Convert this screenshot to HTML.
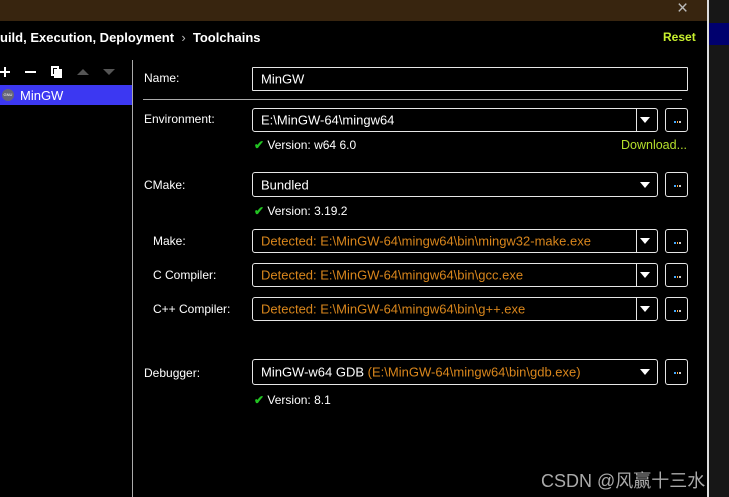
<!DOCTYPE html>
<html><head><meta charset="utf-8"><style>
*{margin:0;padding:0;box-sizing:border-box}
body{width:729px;height:497px;background:#000;position:relative;overflow:hidden;font-family:"Liberation Sans","Noto Sans CJK SC",sans-serif;font-size:12px;color:#fff}
.a{position:absolute;white-space:nowrap}
.box{position:absolute;border:1px solid #e6e6e6;border-radius:3px}
.txt{position:absolute;left:8px;top:50%;transform:translateY(-50%);white-space:nowrap;font-size:13px}
.or{color:#d9861c}
.arr{position:absolute;right:7px;top:50%;margin-top:-3px;width:0;height:0;border-left:5px solid transparent;border-right:5px solid transparent;border-top:6px solid #fff}
.div{position:absolute;right:20px;top:0;bottom:0;border-left:1px solid #e6e6e6}
.btn{position:absolute;border:1px solid #e6e6e6;border-radius:3px;width:23px;height:24px}
.btn:after{content:"";position:absolute;left:8px;top:12px;width:7px;height:2px;background:linear-gradient(90deg,#4af 0 2px,transparent 2px 3px,#fa4 3px 4px,transparent 4px 5px,#ccc 5px)}
.ok{color:#22c322;font-weight:bold}
.lbl{font-size:12px}
</style></head><body>
<div class="a" style="left:0;top:0;width:707px;height:21px;background:#38250f"></div>
<div class="a" style="left:677px;top:-2px;color:#bbb;font-size:19px">×</div>
<div class="a" style="left:707px;top:0;width:2px;height:497px;background:#ddd"></div>
<div class="a" style="left:709px;top:0;width:20px;height:497px;background:#171717"></div>
<div class="a" style="left:709px;top:23px;width:20px;height:22px;background:#00006e"></div>
<div class="a" style="left:0;top:30px;font-weight:bold;font-size:13px">uild, Execution, Deployment &nbsp;<span style="color:#bbb;font-weight:normal">›</span>&nbsp; Toolchains</div>
<div class="a" style="left:663px;top:30px;font-weight:bold;font-size:12px;color:#c8f02e">Reset</div>
<div class="a" style="left:0;top:71px;width:10px;height:2px;background:#fff"></div>
<div class="a" style="left:4px;top:67px;width:2px;height:10px;background:#fff"></div>
<div class="a" style="left:25px;top:71px;width:11px;height:2px;background:#fff"></div>
<div class="a" style="left:51px;top:66px;width:8px;height:10px;border:2px solid #fff"></div>
<div class="a" style="left:54px;top:69px;width:8px;height:9px;background:#fff"></div>
<div class="a" style="left:77px;top:69px;border-left:6px solid transparent;border-right:6px solid transparent;border-bottom:6px solid #555"></div>
<div class="a" style="left:103px;top:69px;border-left:6px solid transparent;border-right:6px solid transparent;border-top:6px solid #555"></div>
<div class="a" style="left:132px;top:60px;width:1px;height:437px;background:#aaa"></div>
<div class="a" style="left:0;top:85px;width:132px;height:20px;background:#3c38f2"></div>
<div class="a" style="left:2px;top:89px;width:12px;height:12px;border-radius:50%;background:#667;font-size:4px;line-height:12px;text-align:center">GNU</div>
<div class="a" style="left:20px;top:88px;font-size:13px">MinGW</div>

<div class="a lbl" style="left:144px;top:71px">Name:</div>
<div class="box" style="left:252px;top:67px;width:436px;height:24px;border-radius:1px"><span class="txt">MinGW</span></div>
<div class="a" style="left:143px;top:99px;width:539px;height:1px;background:#aaa"></div>

<div class="a lbl" style="left:144px;top:112px">Environment:</div>
<div class="box" style="left:252px;top:108px;width:406px;height:24px"><span class="txt">E:\MinGW-64\mingw64</span><div class="div"></div><div class="arr"></div></div>
<div class="btn" style="left:665px;top:108px"></div>
<div class="a" style="left:254px;top:138px"><span class="ok">✔</span>&nbsp;Version: w64 6.0</div>
<div class="a" style="left:621px;top:138px;color:#b6e02c;font-size:12.5px">Download...</div>

<div class="a lbl" style="left:144px;top:178px">CMake:</div>
<div class="box" style="left:252px;top:172px;width:406px;height:25px"><span class="txt">Bundled</span><div class="arr"></div></div>
<div class="btn" style="left:665px;top:172px;height:25px"></div>
<div class="a" style="left:254px;top:204px"><span class="ok">✔</span>&nbsp;Version: 3.19.2</div>

<div class="a lbl" style="left:153px;top:234px">Make:</div>
<div class="box" style="left:252px;top:229px;width:406px;height:24px"><span class="txt or">Detected: E:\MinGW-64\mingw64\bin\mingw32-make.exe</span><div class="div"></div><div class="arr"></div></div>
<div class="btn" style="left:665px;top:229px"></div>
<div class="a lbl" style="left:153px;top:268px">C Compiler:</div>
<div class="box" style="left:252px;top:263px;width:406px;height:24px"><span class="txt or">Detected: E:\MinGW-64\mingw64\bin\gcc.exe</span><div class="div"></div><div class="arr"></div></div>
<div class="btn" style="left:665px;top:263px"></div>
<div class="a lbl" style="left:153px;top:302px">C++ Compiler:</div>
<div class="box" style="left:252px;top:297px;width:406px;height:24px"><span class="txt or">Detected: E:\MinGW-64\mingw64\bin\g++.exe</span><div class="div"></div><div class="arr"></div></div>
<div class="btn" style="left:665px;top:297px"></div>

<div class="a lbl" style="left:144px;top:366px">Debugger:</div>
<div class="box" style="left:252px;top:359px;width:406px;height:26px"><span class="txt">MinGW-w64 GDB <span class="or">(E:\MinGW-64\mingw64\bin\gdb.exe)</span></span><div class="arr"></div></div>
<div class="btn" style="left:665px;top:359px;height:26px"></div>
<div class="a" style="left:254px;top:393px"><span class="ok">✔</span>&nbsp;Version: 8.1</div>

<div class="a" style="left:541px;top:467px;font-size:18px;color:#aaa">CSDN @风赢十三水</div>
</body></html>
